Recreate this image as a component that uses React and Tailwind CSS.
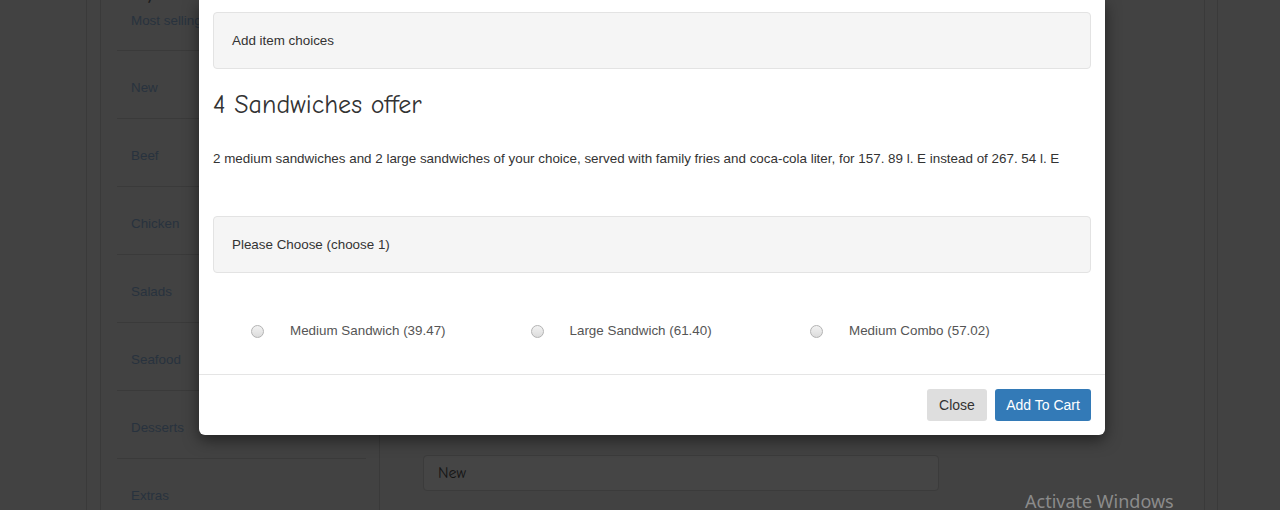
import React from 'react';

const categories = ['New', 'Beef', 'Chicken', 'Salads', 'Seafood', 'Desserts', 'Extras'];

const choices = ['Medium Sandwich (39.47)', 'Large Sandwich (61.40)', 'Medium Combo (57.02)'];

const comic = { fontFamily: '"Comic Sans MS", "Comic Neue", cursive' };

export default function App() {
  return (
    <div className="relative w-[1280px] h-[510px] overflow-hidden bg-[#424242] font-['Liberation_Sans',Arial,sans-serif]">
      {/* page behind the dialog (already dimmed) */}
      <div className="flex h-full pl-[86px]">
        <div className="w-[14px] border-l border-[#3a3a3a]" />
        <div className="w-[280px] border-l border-r border-[#3a3a3a] pl-[16px] pr-[13px]">
          <div className="h-[4px] overflow-hidden flex items-end pl-[14px]">
            <span className="text-[24px] leading-[28px] text-[#1c1c1c]" style={comic}>By Category</span>
          </div>
          <div className="h-[46px] pt-[7px] pl-[14px] text-[13.4px] leading-[20px] text-[#28323e]">Most selling</div>
          {categories.map((c) => (
            <div key={c} className="h-[68px] border-t border-[#3a3a3a] pt-[27px] pl-[14px] text-[13.4px] leading-[20px] text-[#28323e]">
              {c}
            </div>
          ))}
        </div>
        <div className="w-[825px] border-r border-[#3a3a3a] pl-[43px] pt-[455px]">
          <div className="w-[516px] h-[36px] rounded-[4px] border border-[#3b3b3b] bg-[#454545] pl-[14px] flex items-center text-[16px] text-[#151515]" style={comic}>
            New
          </div>
        </div>
        <div className="w-[13px] border-r border-[#3a3a3a]" />
      </div>

      <div className="absolute left-[1025px] top-[488px] text-[18px] leading-[26px] text-[#8b8b8b] font-['Noto_Sans',sans-serif]">
        Activate Windows
      </div>

      {/* dialog */}
      <div className="absolute left-[199px] top-0 w-[906px] bg-white rounded-b-[6px] shadow-[0_5px_15px_rgba(0,0,0,0.5)] text-[#333]">
        <div className="px-[14px] pt-[12px] pb-[33px]">
          <div className="h-[57px] rounded-[4px] border border-[#e3e3e3] bg-[#f5f5f5] pl-[18px] pt-[2px] flex items-center text-[13.4px]">
            Add item choices
          </div>
          <h4 className="mt-[18px] h-[36px] text-[26px] leading-[36px] text-[#333]" style={comic}>
            4 Sandwiches offer
          </h4>
          <p className="mt-[26px] text-[13.4px] leading-[20px]">
            2 medium sandwiches and 2 large sandwiches of your choice, served with family fries and coca-cola liter, for 157. 89 l. E instead of 267. 54 l. E
          </p>
          <div className="mt-[47px] h-[57px] rounded-[4px] border border-[#e3e3e3] bg-[#f5f5f5] pl-[18px] pt-[2px] flex items-center text-[13.4px]">
            Please Choose (choose 1)
          </div>
          <div className="mt-[48px] flex pl-[38px]">
            {choices.map((c) => (
              <label key={c} className="w-[279.5px] h-[20px] flex items-center gap-[26px] text-[13.4px] text-[#555]">
                <span className="w-[13px] h-[13px] rounded-full border border-[#b3b3b3] bg-gradient-to-b from-[#f2f2f2] to-[#dcdcdc] shrink-0" />
                {c}
              </label>
            ))}
          </div>
        </div>
        <div className="border-t border-[#e5e5e5] px-[14px] pt-[14px] pb-[14px] flex justify-end gap-[8px]">
          <button className="w-[60px] h-[32px] rounded-[3px] bg-[#dedede] text-[14px] text-[#333]">Close</button>
          <button className="w-[96px] h-[32px] rounded-[3px] bg-[#337ab7] text-[14px] text-white">Add To Cart</button>
        </div>
      </div>
    </div>
  );
}
